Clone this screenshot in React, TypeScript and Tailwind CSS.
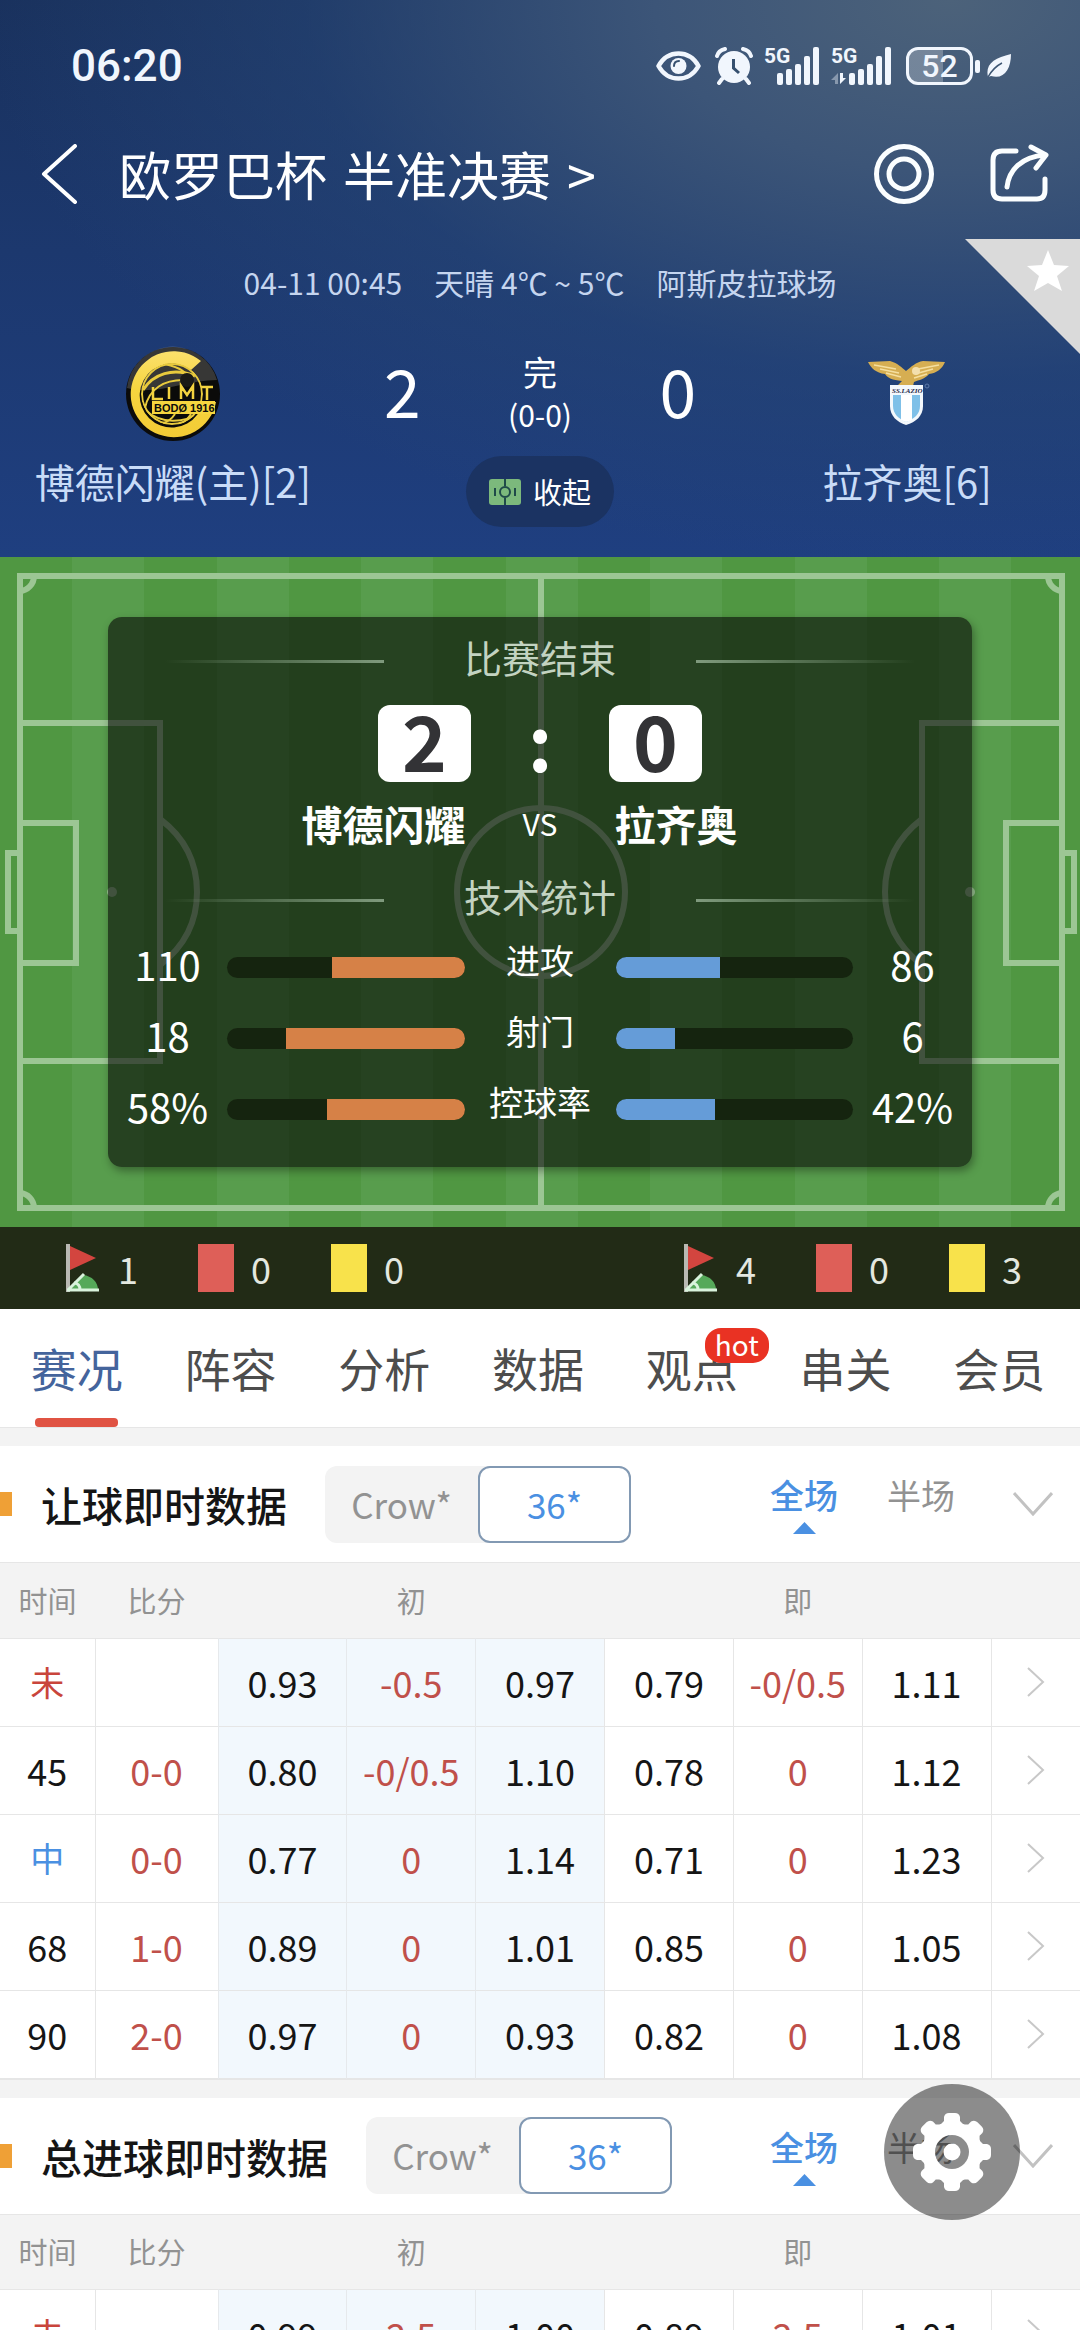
import React from "react";

const FONT = "font-['Noto_Sans_CJK_SC','Noto_Sans',sans-serif]";

const tabs = ["赛况", "阵容", "分析", "数据", "观点", "串关", "会员"];

const stats = [
  { label: "进攻", home: "110", away: "86", homePct: 56, awayPct: 44 },
  { label: "射门", home: "18", away: "6", homePct: 75, awayPct: 25 },
  { label: "控球率", home: "58%", away: "42%", homePct: 58, awayPct: 42 },
];

interface OddsRow {
  time: string;
  score: string;
  first: string[];
  live: string[];
}

const handicapRows: OddsRow[] = [
  { time: "未", score: "", first: ["0.93", "-0.5", "0.97"], live: ["0.79", "-0/0.5", "1.11"] },
  { time: "45", score: "0-0", first: ["0.80", "-0/0.5", "1.10"], live: ["0.78", "0", "1.12"] },
  { time: "中", score: "0-0", first: ["0.77", "0", "1.14"], live: ["0.71", "0", "1.23"] },
  { time: "68", score: "1-0", first: ["0.89", "0", "1.01"], live: ["0.85", "0", "1.05"] },
  { time: "90", score: "2-0", first: ["0.97", "0", "0.93"], live: ["0.82", "0", "1.08"] },
];

const totalRows: OddsRow[] = [
  { time: "未", score: "", first: ["0.99", "2.5", "1.00"], live: ["0.89", "2.5", "1.01"] },
];

/* ---------- status bar ---------- */

const SignalIcon = ({ second = false }: { second?: boolean }) => (
  <svg className="overflow-visible" width="61" height="40" viewBox="0 0 61 40" fill="#f1f6fd">
    <text x="0" y="17" fontSize="21" fontWeight="700" fontFamily="Roboto, sans-serif">
      5G
    </text>
    {second && (
      <>
        <path d="M7 27 L0 34 H4 V38 H7 Z" opacity="0.4" />
        <path d="M9 27 V38 L15 32 H12 V27 Z" />
      </>
    )}
    {second && <rect x="18" y="27" width="6" height="12" rx="2" />}
    <rect x={second ? 27 : 13} y={second ? 23 : 27} width="6" height={second ? 16 : 12} rx="2" />
    <rect x={second ? 36 : 22} y={second ? 18 : 23} width="6" height={second ? 21 : 16} rx="2" />
    <rect x={second ? 45 : 31} y={second ? 10 : 18} width="6" height={second ? 29 : 21} rx="2" />
    <rect x={second ? 54 : 40} y={second ? 1 : 10} width="6" height={second ? 38 : 29} rx="2" />
    {!second && <rect x="49" y="1" width="6" height="38" rx="2" />}
  </svg>
);

const StatusBar = () => (
  <div className="h-[132px] pl-[71px] pr-[68px] flex items-center justify-between text-[#f1f6fd]">
    <span className="font-['Roboto',sans-serif] font-medium text-[44px] leading-none">06:20</span>
    <div className="flex items-center">
      <svg className="mr-[14px]" width="45" height="30" viewBox="0 0 45 30" fill="none">
        <path
          d="M2.500 15 C7 7 14 2.500 22.500 2.500 C31 2.500 38 7 42.500 15 C38 23 31 27.500 22.500 27.500 C14 27.500 7 23 2.500 15 Z"
          stroke="#f1f6fd"
          strokeWidth="4.500"
          strokeLinejoin="round"
        />
        <circle cx="22.500" cy="15" r="8" fill="#f1f6fd" />
        <path d="M18 15 C18 12 20 10 23 10" stroke="#36506f" strokeWidth="2" strokeLinecap="round" />
      </svg>
      <svg className="mr-[11px]" width="38" height="38" viewBox="0 0 38 38" fill="none">
        <circle cx="19" cy="20" r="16" fill="#f1f6fd" />
        <path d="M2 9 C3 5 6 3 10 2" stroke="#f1f6fd" strokeWidth="4" strokeLinecap="round" />
        <path d="M36 9 C35 5 32 3 28 2" stroke="#f1f6fd" strokeWidth="4" strokeLinecap="round" />
        <path d="M7 32 L4 36 M31 32 L34 36" stroke="#f1f6fd" strokeWidth="4" strokeLinecap="round" />
        <path d="M18.500 12 V21 L24 26" stroke="#36506f" strokeWidth="3" />
      </svg>
      <div className="mr-[6px]">
        <SignalIcon />
      </div>
      <div className="mr-[14px]">
        <SignalIcon second />
      </div>
      <div className="h-[38px] w-[67px] rounded-[12px] border-[3px] border-[#f1f6fd] bg-gradient-to-r from-white/25 from-55% to-transparent to-55% flex items-center justify-center font-['Roboto',sans-serif] font-medium text-[32px] leading-none">
        52
      </div>
      <div className="ml-[2px] mr-[6px] h-[13px] w-[5px] rounded-[2px] bg-[#f1f6fd]" />
      <svg width="26" height="26" viewBox="0 0 26 26">
        <path d="M2 24 C-1 11 8 5 25 1 C25 16 18 27 5 23 Z" fill="#f1f6fd" />
        <path d="M2 24 C6 17 10 13 16 10" stroke="#3d5673" strokeWidth="1.500" fill="none" />
      </svg>
    </div>
  </div>
);

/* ---------- club crests ---------- */

const HomeCrest = () => (
  <svg width="96" height="96" viewBox="0 0 96 96">
    <defs>
      <clipPath id="ballClip">
        <circle cx="47" cy="48" r="31" />
      </clipPath>
      <linearGradient id="gold" x1="0" y1="0" x2="0" y2="1">
        <stop offset="0" stopColor="#fbe06c" />
        <stop offset="0.45" stopColor="#f6d53f" />
        <stop offset="1" stopColor="#f3cb35" />
      </linearGradient>
    </defs>
    <circle cx="48" cy="48" r="47" fill="#0b0b0a" />
    <path d="M2 42 A46 46 0 0 1 92 34 C62 34 30 50 2 42 Z" fill="#ffffff" opacity="0.18" />
    <path d="M76 15 A43 43 0 1 0 91 56 H78 A32 32 0 1 1 66 24 Z" fill="url(#gold)" />
    <g clipPath="url(#ballClip)" stroke="#e8ca3d" fill="none">
      <circle cx="47" cy="48" r="30" strokeWidth="2" />
      <path d="M18 44 C28 28 48 21 70 30" strokeWidth="3" />
      <path d="M20 62 C24 42 40 34 58 34" strokeWidth="2" />
      <path d="M40 18 C56 22 62 26 64 34" strokeWidth="2" />
      <path d="M50 68 C46 74 42 76 38 77" strokeWidth="2" />
      <path d="M66 68 C62 74 58 77 54 79" strokeWidth="2" />
      <path d="M20 64 C36 78 58 78 76 66" strokeWidth="2" />
    </g>
    <circle cx="62" cy="34" r="7" fill="#1a1a16" />
    <g stroke="#f3d340" strokeWidth="2.500" fill="none">
      <path d="M28 41 V53 H38 M44 41 V53 M56 53 V40 L62 49 L68 40 V53 M76 41 H88 M82 41 V54" />
    </g>
    <rect x="27" y="55" width="63" height="13" fill="#f6d53f" />
    <text
      x="29"
      y="66"
      fontSize="11"
      fontFamily="'Liberation Sans', sans-serif"
      fontWeight="700"
      fill="#0b0b0a"
    >
      BODØ 1916
    </text>
  </svg>
);

const AwayCrest = () => (
  <svg width="78" height="66" viewBox="0 0 78 66">
    <path
      d="M0 2 L22 1 C30 3 34 8 38 11 C43 7 48 2 55 1 L77 2 C74 9 69 13 61 14 C57 19 51 20 46 22 L45 26 L28 27 L34 21 C24 20 20 18 17 14 C8 13 3 8 0 2 Z"
      fill="#d6ae52"
    />
    <path
      d="M6 5 L28 9 M12 9 L31 13 M18 13 L33 17 M71 5 L50 9 M65 9 L47 14 M59 14 L46 18"
      stroke="#f5dfa0"
      strokeWidth="1.500"
    />
    <circle cx="48" cy="11" r="4" fill="#f3dfae" />
    <path d="M22 25 H55 V46 C55 56 48 62 38 65 C29 62 22 56 22 46 Z" fill="#f4f8fc" />
    <path d="M25 35 H52 V46 C52 54 46 59 38 62 C31 59 25 54 25 46 Z" fill="#7fc0e8" />
    <path d="M33 35 H44 V60 L38 62 L33 60 Z" fill="#ffffff" />
    <text
      x="24"
      y="33"
      fontSize="7"
      fontStyle="italic"
      fontWeight="700"
      fontFamily="'Liberation Serif', serif"
      fill="#1d2748"
    >
      SS.LAZIO
    </text>
    <circle cx="59" cy="26" r="2" fill="none" stroke="#5d7aaa" />
  </svg>
);

/* ---------- header ---------- */

const Header = () => (
  <header className="relative text-white bg-[radial-gradient(ellipse_at_88%_0%,#4c627a_0%,#3c5578_22%,rgba(40,72,120,0.5)_48%,transparent_72%),linear-gradient(to_bottom,#19315d_0%,#1c386e_45%,#1f3f80_100%)]">
    <StatusBar />
    <div className="h-[84px] pl-[40px] pr-[31px] flex items-center">
      <button aria-label="返回">
        <svg width="38" height="60" viewBox="0 0 38 60" fill="none" stroke="#fff" strokeWidth="4">
          <path d="M35 2 L4 30 L35 58" strokeLinejoin="round" strokeLinecap="round" />
        </svg>
      </button>
      <a href="#league" className="ml-[41px] flex gap-[16px] text-[52px] leading-none">
        <span>欧罗巴杯</span>
        <span>半准决赛</span>
        <span>&gt;</span>
      </a>
      <button aria-label="关注" className="ml-auto">
        <svg width="60" height="60" viewBox="0 0 60 60" fill="none" stroke="#fbfeff">
          <circle cx="30" cy="30" r="27.500" strokeWidth="5" />
          <circle cx="30" cy="30" r="15" strokeWidth="5" />
        </svg>
      </button>
      <button aria-label="分享" className="ml-[55px]">
        <svg width="60" height="60" viewBox="0 0 60 60" fill="none" stroke="#fbfeff" strokeWidth="5">
          <path
            d="M27 7 H13 Q4 7 4 16 V46 Q4 55 13 55 H48 Q56 55 56 46 V35"
            strokeLinecap="round"
          />
          <path d="M18 43 C20 26 32 13 56 11" strokeLinecap="round" />
          <path d="M42 3 L57 11 L47 24" strokeLinecap="round" strokeLinejoin="round" />
        </svg>
      </button>
    </div>
    <p className="mt-[43px] h-[46px] flex items-center justify-center gap-[32px] text-[30px] text-[#c5d5ef]">
      <span>04-11 00:45</span>
      <span>天晴 4℃ ~ 5℃</span>
      <span>阿斯皮拉球场</span>
    </p>

    <button aria-label="收藏" className="absolute right-0 top-[239px]">
      <svg width="115" height="115" viewBox="0 0 115 115">
        <path d="M0 0 H115 V115 Z" fill="#dadada" />
        <path
          d="M83 11 L89 26 L104 27 L92 37 L97 52 L83 44 L69 52 L74 37 L62 27 L77 26 Z"
          fill="#fff"
        />
      </svg>
    </button>

    <div className="grid grid-cols-[128fr_42fr_60fr_42fr_128fr] justify-items-center pb-[30px] mt-[3px]">
      <div className="pt-[38px] flex flex-col items-center">
        <HomeCrest />
        <span className="mt-[13px] text-[40px] leading-[52px] text-[#c9dcf8] whitespace-nowrap">
          博德闪耀(主)[2]
        </span>
      </div>
      <span className="pt-[48px] text-[66px] leading-[66px]">2</span>
      <div className="flex flex-col items-center">
        <span className="pt-[44px] text-[34px] leading-[40px]">完</span>
        <span className="mt-[2px] text-[30px] leading-[40px]">(0-0)</span>
        <button className="mt-[22px] h-[71px] w-[148px] rounded-full bg-[#1b3362] flex items-center justify-center gap-[12px] text-[29px]">
          <svg width="32" height="26" viewBox="0 0 32 26" fill="none" stroke="#1f4a49" strokeWidth="2">
            <rect width="32" height="26" rx="3" fill="#7cb97c" stroke="none" />
            <path d="M16 0 V7 M16 19 V26 M6 9 V17 M26 9 V17" />
            <circle cx="16" cy="13" r="5" />
          </svg>
          收起
        </button>
      </div>
      <span className="pt-[48px] text-[66px] leading-[66px]">0</span>
      <div className="pt-[52px] flex flex-col items-center">
        <AwayCrest />
        <span className="mt-[29px] text-[40px] leading-[52px] text-[#c9dcf8]">拉齐奥[6]</span>
      </div>
    </div>
  </header>
);

/* ---------- pitch ---------- */

const PitchHalf = () => (
  <g>
    <path d="M20 166 H160 V504 H20 M20 266 H76 V406 H20" />
    <path d="M20 296 H8 V374 H20" />
    <path d="M160 262 Q197 290 197 335 Q197 380 160 408" />
    <path d="M34 19 A15 15 0 0 1 20 34 M34 651 A15 15 0 0 0 20 636" />
    <circle cx="112" cy="335" r="5" fill="#9cc694" stroke="none" />
  </g>
);

const Pitch = () => (
  <svg
    className="absolute inset-0 w-full h-full"
    viewBox="0 0 1080 670"
    preserveAspectRatio="none"
    aria-hidden="true"
  >
    <rect width="1080" height="670" fill="#509742" />
    {[72, 217, 361, 506, 650, 795, 939].map((x) => (
      <rect key={x} x={x} y="0" width="72" height="670" fill="#589d4d" />
    ))}
    <g fill="none" stroke="#9cc694" strokeWidth="6">
      <rect x="20" y="19" width="1042" height="632" />
      <path d="M541 19 V651" />
      <circle cx="541" cy="335" r="84" />
      <circle cx="541" cy="335" r="5" fill="#9cc694" stroke="none" />
      <PitchHalf />
      <g transform="translate(1082 0) scale(-1 1)">
        <PitchHalf />
      </g>
    </g>
  </svg>
);

const PanelTitle = ({ children }: { children: React.ReactNode }) => (
  <div className="flex items-center justify-center gap-20 text-[#c3d3c1]">
    <span className="mt-[8px] h-[3px] w-[219px] bg-gradient-to-r from-transparent to-[#7f9a7d]" />
    <h2 className="text-[38px] leading-[40px]">{children}</h2>
    <span className="mt-[8px] h-[3px] w-[219px] bg-gradient-to-l from-transparent to-[#7f9a7d]" />
  </div>
);

const ScoreBox = ({ children }: { children: React.ReactNode }) => (
  <span className="h-[77px] w-[93px] pb-[10px] rounded-[12px] bg-white text-[#333336] flex items-center justify-center">
    {children}
  </span>
);

const MatchPanel = () => (
  <section className="relative py-[60px]">
    <Pitch />
    <div className="relative mx-[10%] rounded-[14px] bg-[#050505]/60 shadow-[2px_4px_8px_rgba(0,0,0,0.35)] pt-[20px] pb-[22px] text-white">
      <PanelTitle>比赛结束</PanelTitle>
      <div className="mt-[28px] flex items-center justify-center text-[76px] font-bold leading-[66px]">
        <ScoreBox>2</ScoreBox>
        <span className="w-[138px] pb-[10px] text-center">:</span>
        <ScoreBox>0</ScoreBox>
      </div>
      <div className="mt-[16px] grid grid-cols-[1fr_149px_1fr] items-center text-[41px] leading-[50px] font-bold">
        <span className="text-right">博德闪耀</span>
        <span className="text-center text-[30px] font-normal">VS</span>
        <span>拉齐奥</span>
      </div>
      <div className="mt-[28px]">
        <PanelTitle>技术统计</PanelTitle>
      </div>
      <div className="mt-[16px]">
        {stats.map((s) => (
          <div
            key={s.label}
            className="h-[71px] grid grid-cols-[119px_1fr_151px_1fr_119px] items-center text-center text-[40px] leading-none"
          >
            <span className="pb-[8px]">{s.home}</span>
            <div className="h-[21px] rounded-full bg-[#15240f] overflow-hidden flex justify-end">
              <div className="bg-[#d68147]" style={{ width: `${s.homePct}%` }} />
            </div>
            <span className="pb-[16px] text-[34px]">{s.label}</span>
            <div className="h-[21px] rounded-full bg-[#15240f] overflow-hidden flex">
              <div className="bg-[#659cd8]" style={{ width: `${s.awayPct}%` }} />
            </div>
            <span className="pb-[8px]">{s.away}</span>
          </div>
        ))}
      </div>
    </div>
  </section>
);

/* ---------- corners and cards ---------- */

const CornerIcon = () => (
  <svg width="36" height="48" viewBox="0 0 36 48">
    <rect x="1" y="0" width="4" height="48" fill="#b9b9b3" />
    <path d="M5 2 L31 14 L5 26 Z" fill="#d3453f" />
    <path d="M3 46 L18 31 C27 32 33 38 33 46 Z" fill="#56a95a" />
    <path d="M2 46 H34 M3 46 L19 30" stroke="#d9f3dc" strokeWidth="3" fill="none" />
    <path d="M9 39 C13 39 15 42 15 46" stroke="#d9f3dc" strokeWidth="3" fill="none" />
  </svg>
);

interface CardCountProps {
  corners: number;
  red: number;
  yellow: number;
}

const CardCounts: React.FC<CardCountProps> = ({ corners, red, yellow }) => (
  <div className="flex items-center gap-[60px]">
    <span className="flex items-center gap-[17px]">
      <CornerIcon />
      {corners}
    </span>
    <span className="flex items-center gap-[17px]">
      <i className="block h-[48px] w-[36px] bg-[#de5f58]" />
      {red}
    </span>
    <span className="flex items-center gap-[17px]">
      <i className="block h-[48px] w-[36px] bg-[#f8e24b]" />
      {yellow}
    </span>
  </div>
);

/* ---------- tabs ---------- */

const Tabs = () => (
  <nav className="h-[118px] pr-[4px] grid grid-cols-7 bg-white">
    {tabs.map((t, i) => (
      <a
        key={t}
        href={`#tab-${i}`}
        className={`relative flex flex-col items-center justify-between pt-[28px] text-[46px] leading-[60px] ${
          i === 0 ? "text-[#44649c]" : "text-[#4d4d4d]"
        }`}
      >
        {t}
        {i === 0 && <span className="h-[9px] w-[83px] rounded-[4px] bg-[#e05343]" />}
        {t === "观点" && (
          <span className="absolute left-[90px] top-[19px] h-[35px] w-[64px] rounded-[16px] bg-[#e93223] text-white text-[28px] leading-[32px] text-center">
            hot
          </span>
        )}
      </a>
    ))}
  </nav>
);

/* ---------- odds tables ---------- */

const OddsSection = ({ title, rows }: { title: string; rows: OddsRow[] }) => (
  <section>
    <div className="h-[19px] bg-[#f3f3f3] border-t border-[#e6e6e6]" />
    <div className="h-[117px] bg-white border-b border-[#e6e6e6] flex items-center pr-[27px]">
      <span className="h-[24px] w-[12px] bg-[#efa036]" />
      <h3 className="ml-[29px] mr-[38px] text-[41px] font-medium text-[#151515] leading-[50px]">{title}</h3>
      <div className="flex h-[77px] rounded-[12px] bg-[#f3f3f3] text-[35px]">
        <button className="w-[153px] text-[#929292]">Crow*</button>
        <button className="w-[153px] rounded-[12px] border-2 border-[#8299b3] bg-white text-[#4a90e2]">
          36*
        </button>
      </div>
      <div className="ml-auto self-stretch flex items-start gap-[49px] pt-[27px] text-[34px] leading-[44px]">
        <button className="flex flex-col items-center text-[#4a90e2] font-medium">
          全场
          <svg className="mt-[5px]" width="23" height="12" viewBox="0 0 23 12">
            <path d="M11.500 0 L23 12 H0 Z" fill="#4a90e2" />
          </svg>
        </button>
        <button className="text-[#929292]">半场</button>
      </div>
      <button aria-label="展开" className="ml-[58px]">
        <svg width="40" height="26" viewBox="0 0 40 26" fill="none" stroke="#c2c2c2" strokeWidth="3">
          <path d="M1 2 L20 23 L39 2" />
        </svg>
      </button>
    </div>
    <table className="w-full table-fixed border-collapse text-[36px] leading-none text-center text-[#151515]">
      <colgroup>
        <col className="w-[95px]" />
        <col className="w-[123px]" />
        <col />
        <col />
        <col />
        <col />
        <col />
        <col />
        <col className="w-[89px]" />
      </colgroup>
      <thead>
        <tr className="h-[75px] bg-[#f3f3f3] text-[29px] text-[#929292] border-b border-[#e6e6e6]">
          <th className="font-normal">时间</th>
          <th className="font-normal">比分</th>
          <th className="font-normal" colSpan={3}>
            初
          </th>
          <th className="font-normal" colSpan={3}>
            即
          </th>
          <th />
        </tr>
      </thead>
      <tbody>
        {rows.map((r) => (
          <tr key={r.time} className="h-[88px] bg-white border-b border-[#e6e6e6]">
            <td
              className={
                r.time === "未" ? "text-[#c9453b] text-[34px]" : r.time === "中" ? "text-[#4a90e2] text-[34px]" : ""
              }
            >
              {r.time}
            </td>
            <td className="border-l border-[#e6e6e6] text-[#c0504a]">{r.score}</td>
            {r.first.map((v, i) => (
              <td
                key={i}
                className={`border-l border-[#e6e9ec] bg-[#f2f8fd] ${i === 1 ? "text-[#c0504a]" : ""}`}
              >
                {v}
              </td>
            ))}
            {r.live.map((v, i) => (
              <td key={i} className={`border-l border-[#e6e6e6] ${i === 1 ? "text-[#c0504a]" : ""}`}>
                {v}
              </td>
            ))}
            <td className="border-l border-[#e6e6e6]">
              <svg
                className="mx-auto"
                width="18"
                height="30"
                viewBox="0 0 18 30"
                fill="none"
                stroke="#c8c8c8"
                strokeWidth="2"
              >
                <path d="M1 1 L16 15 L1 29" />
              </svg>
            </td>
          </tr>
        ))}
      </tbody>
    </table>
  </section>
);

/* Eight teeth around the hub */
const GearIcon = () => (
  <svg width="80" height="80" viewBox="-40 -40 80 80">
    <defs>
      <mask id="gearHole">
        <rect x="-40" y="-40" width="80" height="80" fill="#fff" />
        <circle r="17" fill="#000" />
      </mask>
    </defs>
    <g fill="#fff" mask="url(#gearHole)">
      <circle r="30" />
      {[0, 45, 90, 135, 180, 225, 270, 315].map((a) => (
        <path
          key={a}
          transform={`rotate(${a})`}
          d="M-13 -26 L-8 -31 L-8 -35 Q-7 -39 -3 -39 H3 Q7 -39 8 -35 L8 -31 L13 -26 Z"
        />
      ))}
    </g>
    <circle r="8.500" fill="#fff" />
  </svg>
);

const App = () => (
  <main className={`relative h-screen overflow-hidden bg-white ${FONT}`}>
    <Header />
    <MatchPanel />
    <div className="h-[82px] pl-[65px] pr-[58px] flex items-center justify-between bg-[#222b16] text-[36px] text-[#e4e8e0]">
      <CardCounts corners={1} red={0} yellow={0} />
      <CardCounts corners={4} red={0} yellow={3} />
    </div>
    <Tabs />
    <OddsSection title="让球即时数据" rows={handicapRows} />
    <OddsSection title="总进球即时数据" rows={totalRows} />
    <button
      aria-label="设置"
      className="fixed bottom-[110px] right-[60px] size-[136px] rounded-full bg-black/45 flex items-center justify-center"
    >
      <GearIcon />
    </button>
  </main>
);

export default App;
